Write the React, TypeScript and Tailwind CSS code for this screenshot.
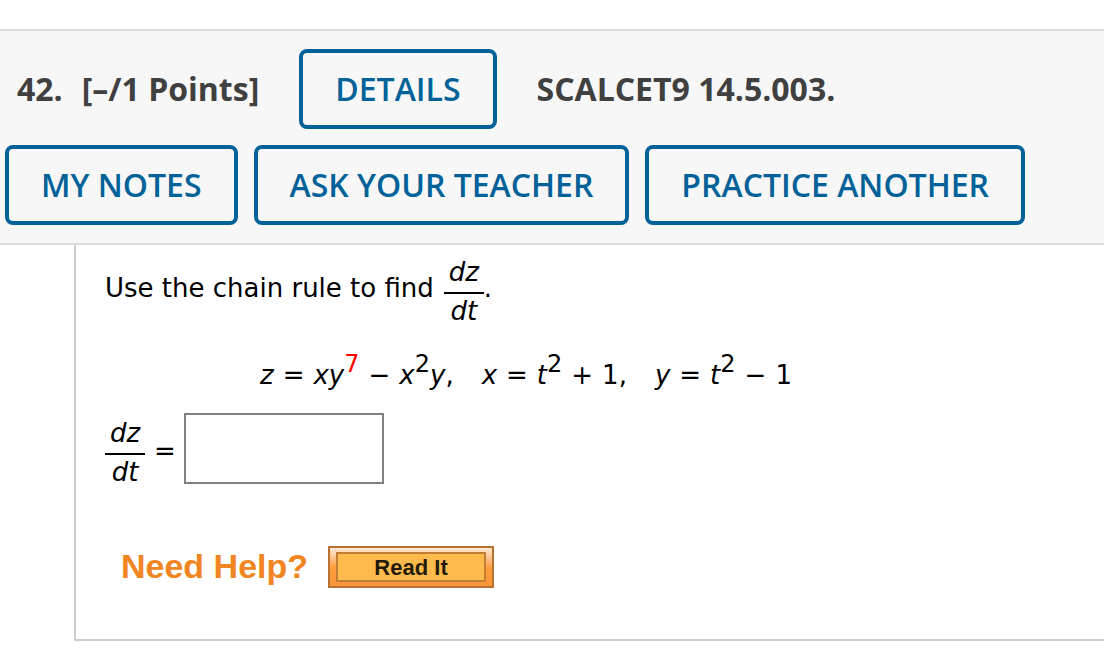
import { useState } from "react";
import type { ReactNode } from "react";

function ActionButton({ children }: { children: ReactNode }) {
  return (
    <button
      type="button"
      className="h-20 whitespace-nowrap rounded-lg border-4 border-[#006298] px-8 text-[32px] leading-10 font-semibold text-[#006298]"
    >
      {children}
    </button>
  );
}

function Derivative() {
  return (
    <span className="inline-flex w-10 flex-col text-center italic">
      <span className="border-b-2 border-black pb-0.5 leading-9">dz</span>
      <span className="leading-[34px]">dt</span>
    </span>
  );
}

function Power({ children, red = false }: { children: ReactNode; red?: boolean }) {
  return (
    <sup className={red ? "text-[24px] leading-none text-[#ff0000]" : "text-[24px] leading-none"}>
      {children}
    </sup>
  );
}

function Op({ children }: { children: ReactNode }) {
  return <span className="px-[9px]">{children}</span>;
}

export default function App() {
  const [answer, setAnswer] = useState("");

  return (
    <main className="bg-white pt-[29px] text-black">
      <header className="border-y-2 border-[#dddddd] bg-[#f7f7f7] pt-[18px] pb-[18px] pl-[5px] font-['Open_Sans',sans-serif]">
        <div className="flex items-center">
          <h2 className="flex gap-[19px] whitespace-nowrap pl-3 text-[32px] leading-10 font-bold text-[#404040]">
            <span>42.</span>
            <span>[–/1 Points]</span>
          </h2>
          <div className="pl-10">
            <ActionButton>DETAILS</ActionButton>
          </div>
          <strong className="whitespace-nowrap pl-10 text-[32px] leading-10 font-bold text-[#404040]">
            SCALCET9 14.5.003.
          </strong>
        </div>
        <div className="mt-4 flex gap-4">
          <ActionButton>MY NOTES</ActionButton>
          <ActionButton>ASK YOUR TEACHER</ActionButton>
          <ActionButton>PRACTICE ANOTHER</ActionButton>
        </div>
      </header>

      <section className="ml-[74px] border-b-2 border-l-2 border-[#cccccc] pt-[9px] pb-[51px] pl-[29px] font-[Verdana,'DejaVu_Sans',sans-serif] text-[26px]">
        <p className="flex items-start whitespace-nowrap leading-[68px]">
          <span className="pr-2.5">Use the chain rule to find</span>
          <Derivative />
          <span>.</span>
        </p>

        <p className="mt-[27px] flex items-baseline whitespace-nowrap pl-[155px] leading-10">
          <span><i>z</i><Op>=</Op><i>xy</i><Power red>7</Power><Op>−</Op><i>x</i><Power>2</Power><i>y</i>,</span>
          <span className="pl-7"><i>x</i><Op>=</Op><i>t</i><Power>2</Power><Op>+</Op>1,</span>
          <span className="pl-7"><i>y</i><Op>=</Op><i>t</i><Power>2</Power><Op>−</Op>1</span>
        </p>

        <label className="mt-[18px] flex items-start">
          <span className="flex pt-0.5"><Derivative /></span>
          <span className="pr-2 pl-[9px] leading-[76px]">=</span>
          <input
            type="text"
            aria-label="dz/dt"
            value={answer}
            onChange={(e) => setAnswer(e.target.value)}
            className="h-[71px] w-[200px] border-2 border-[#808080] bg-white px-2"
          />
        </label>

        <div className="mt-[57px] flex items-center gap-5 pl-4 font-['Liberation_Sans',sans-serif] font-bold">
          <span className="pb-0.5 text-[34px] leading-10 text-[#f08521]">Need Help?</span>
          <button
            type="button"
            className="h-[42px] w-[166px] border-2 border-[#b87333] bg-linear-to-b from-[#ffe8d4] via-[#ff9e3d] via-50% to-[#f99539] px-1.5 py-1 text-[22px] leading-6 text-[#241a08]"
          >
            <span className="flex h-full items-center justify-center border-2 border-[#c17f35] bg-[#ffba4d] pt-0.5">
              Read It
            </span>
          </button>
        </div>
      </section>
    </main>
  );
}
